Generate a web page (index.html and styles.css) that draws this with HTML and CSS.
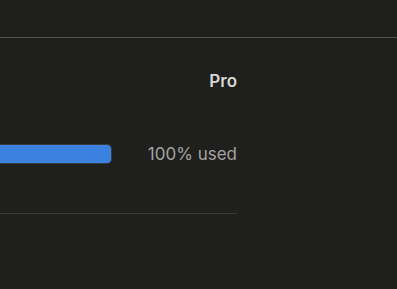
FILE: index.html
```html
<!DOCTYPE html>
<html>
<head>
<meta charset="utf-8">
<link rel="stylesheet" href="styles.css">
</head>
<body>
<div class="topbar"></div>
<section class="plan">
  <div class="plan-name">Pro</div>
  <div class="usage">
    <div class="track"><div class="fill" style="width:100%"></div></div>
    <span class="usage-label">100% used</span>
  </div>
</section>
</body>
</html>
```
FILE: styles.css
```css
html, body {
  margin: 0;
  padding: 0;
  background: #1f1f1e;
  font-family: Inter, "Noto Sans", sans-serif;
}
.topbar {
  height: 37px;
  border-bottom: 1px solid #505050;
}
.plan {
  width: 237px;
  border-bottom: 1px solid #3a3a3a;
  padding-top: 33px;
  padding-bottom: 49px;
}
.plan-name {
  text-align: right;
  font-size: 17px;
  font-weight: 600;
  color: #d8d8d4;
  line-height: 20px;
}
.usage {
  display: flex;
  align-items: center;
  margin-top: 53px;
  gap: 36px;
}
.track {
  flex: 1;
  height: 18px;
  border: 1px solid #3c3c3c;
  border-left: none;
  border-radius: 0 5px 5px 0;
  background: #2a2a2a;
  overflow: hidden;
}
.fill {
  height: 100%;
  background: #3b82e0;
}
.usage-label {
  font-size: 17px;
  color: #a3a3a0;
  line-height: 20px;
}
```
